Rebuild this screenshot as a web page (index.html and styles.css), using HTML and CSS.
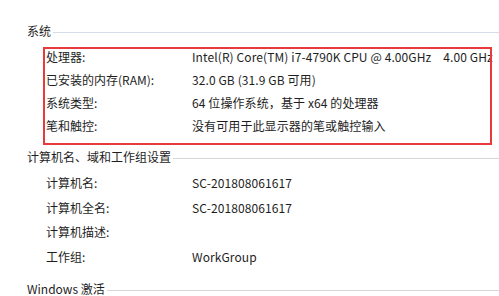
FILE: index.html
```html
<!DOCTYPE html>
<html lang="zh-CN">
<head>
<meta charset="utf-8">
<link rel="stylesheet" href="styles.css">
</head>
<body>
<div class="page">
  <div class="group-head head-sys"><span>系统</span><i class="rule rule-blue"></i></div>
  <div class="rows rows-sys marked">
    <div class="row"><span class="label">处理器:</span><span class="value">Intel(R) Core(TM) i7-4790K CPU @ 4.00GHz<span class="gap"></span>4.00 GHz</span></div>
    <div class="row"><span class="label">已安装的内存(RAM):</span><span class="value">32.0 GB (31.9 GB 可用)</span></div>
    <div class="row"><span class="label">系统类型:</span><span class="value">64 位操作系统，基于 x64 的处理器</span></div>
    <div class="row"><span class="label">笔和触控:</span><span class="value">没有可用于此显示器的笔或触控输入</span></div>
  </div>
  <div class="group-head head-pc"><span>计算机名、域和工作组设置</span><i class="rule rule-gray"></i></div>
  <div class="rows rows-pc">
    <div class="row"><span class="label">计算机名:</span><span class="value">SC-201808061617</span></div>
    <div class="row"><span class="label">计算机全名:</span><span class="value">SC-201808061617</span></div>
    <div class="row"><span class="label">计算机描述:</span><span class="value"></span></div>
    <div class="row"><span class="label">工作组:</span><span class="value">WorkGroup</span></div>
  </div>
  <div class="group-head head-act"><span>Windows 激活</span><i class="rule rule-gray"></i></div>
</div>
</body>
</html>
```

FILE: styles.css
```css
html, body {
  margin: 0;
  padding: 0;
  background: #ffffff;
  overflow: hidden;
}
body {
  width: 499px;
  height: 296px;
  font-family: "Noto Sans CJK SC", "Noto Sans", sans-serif;
  font-size: 12px;
  color: #1e1e1e;
}
.page {
  padding-left: 27px;
  width: 472px;
}
.group-head {
  display: flex;
  align-items: center;
  height: 16px;
  line-height: 16px;
  white-space: nowrap;
}
.group-head span {
  flex: none;
  padding-right: 2px;
}
.rule {
  flex: 1;
  height: 0;
  margin-top: 3px;
}
.rule-blue { border-top: 1px solid #d3dce7; }
.rule-gray { border-top: 1px solid #d7d7d7; }
.head-sys { margin-top: 23px; }
.head-pc { margin-top: 12px; }
.head-act { margin-top: 12px; }
.rows {
  padding-left: 19px;
  position: relative;
}
.rows-sys {
  margin-top: 6px;
}
.rows-pc {
  margin-top: 6px;
}
.row {
  display: grid;
  grid-template-columns: 146px auto;
  white-space: nowrap;
  line-height: 23px;
  height: 23px;
}
.rows-pc .row {
  height: 24.6px;
  line-height: 24.6px;
}
.value {
  letter-spacing: 0.1px;
}
.value .gap {
  display: inline-block;
  width: 12px;
}
.marked::before {
  content: "";
  position: absolute;
  left: 16px;
  top: 2px;
  width: 445px;
  height: 94px;
  border: 2px solid #e83a3c;
  pointer-events: none;
}
```
